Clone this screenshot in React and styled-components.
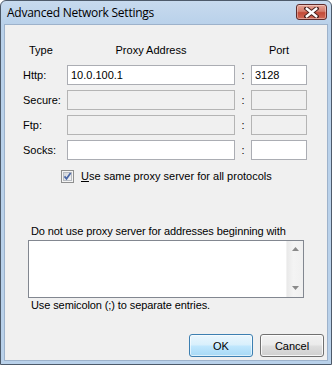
import React from 'react';
import styled, { createGlobalStyle } from 'styled-components';

const GlobalStyle = createGlobalStyle`
  html, body {
    margin: 0;
    padding: 0;
    background: #ffffff;
  }
  * {
    box-sizing: border-box;
  }
`;

const Window = styled.div`
  width: 332px;
  height: 365px;
  display: flex;
  flex-direction: column;
  background: linear-gradient(#c7daee 0px, #b9d1ea 24px, #b9d1ea 100%);
  border: 1px solid #4d5a6a;
  border-radius: 6px 6px 0 0;
  font-family: 'Liberation Sans', Arial, sans-serif;
  font-size: 11px;
  color: #000;
`;

const TitleBar = styled.div`
  height: 23px;
  display: flex;
  align-items: center;
  justify-content: space-between;
  padding: 0 4px 0 6px;
`;

const Title = styled.span`
  font-family: 'Open Sans', 'Liberation Sans', sans-serif;
  font-size: 12px;
  color: #000;
  letter-spacing: -0.25px;
`;

const CloseButton = styled.button`
  width: 31px;
  height: 16px;
  margin-top: -1px;
  padding: 0;
  display: flex;
  align-items: center;
  justify-content: center;
  border: 1px solid #5f2b2b;
  border-radius: 3px;
  background: linear-gradient(#e6a496 0%, #d47c6c 45%, #c24a38 55%, #d06a58 100%);
  box-shadow: inset 0 0 0 1px rgba(255, 255, 255, 0.35);
`;

const Client = styled.div`
  flex: 1;
  margin: 0 3px 3px 3px;
  border: 1px solid #9db2cb;
  background: #f0f0f0;
  display: flex;
  flex-direction: column;
  padding: 18px 3px 3px 18px;
`;

const ProxyGrid = styled.div`
  display: grid;
  grid-template-columns: 44px 168px 16px 56px;
  grid-template-rows: 17px repeat(4, 20px);
  row-gap: 5px;
`;

const HeaderCell = styled.div`
  align-self: start;
  line-height: 14px;
  text-align: ${p => p.$align || 'center'};
  padding-left: ${p => p.$indent || 0}px;
`;

const RowLabel = styled.div`
  align-self: center;
  line-height: 14px;
`;

const Colon = styled.div`
  align-self: center;
  text-align: center;
  line-height: 14px;
`;

const TextField = styled.input`
  width: 100%;
  height: 20px;
  margin: 0;
  padding: 0 3px;
  font-family: 'Liberation Sans', Arial, sans-serif;
  font-size: 11px;
  color: #000;
  border: 1px solid ${p => (p.disabled ? '#b4b4b4' : '#abadb3')};
  background: ${p => (p.disabled ? '#f0f0f0' : '#ffffff')};
  outline: none;
`;

const CheckRow = styled.label`
  display: flex;
  align-items: center;
  gap: 7px;
  margin: 9px 0 0 38px;
  line-height: 14px;
`;

const Underlined = styled.span`
  text-decoration: underline;
`;

const ExcludeBlock = styled.div`
  margin: 42px 0 0 5px;
  width: 276px;
  display: flex;
  flex-direction: column;
`;

const Caption = styled.div`
  line-height: 13px;
  padding-left: 3px;
  letter-spacing: -0.1px;
  margin-bottom: ${p => p.$below || 0}px;
`;

const ListBox = styled.div`
  height: 58px;
  display: flex;
  border: 1px solid #828790;
  background: #ffffff;
  margin-bottom: 1px;
`;

const ListText = styled.textarea`
  flex: 1;
  border: none;
  resize: none;
  outline: none;
  padding: 2px 3px;
  font-family: 'Liberation Sans', Arial, sans-serif;
  font-size: 11px;
  background: transparent;
`;

const ScrollTrack = styled.div`
  width: 17px;
  display: flex;
  flex-direction: column;
  justify-content: space-between;
  align-items: center;
  padding: 6px 0 7px;
  background: linear-gradient(90deg, #e9e9e9, #f4f4f4 40%, #f0f0f0);
  border-left: 1px solid #f2f2f2;
`;

const ButtonBar = styled.div`
  margin-top: auto;
  display: flex;
  justify-content: flex-end;
  gap: 7px;
`;

const DialogButton = styled.button`
  width: 64px;
  height: 23px;
  padding: 0;
  font-family: 'Liberation Sans', Arial, sans-serif;
  font-size: 11px;
  color: #000;
  border-radius: 3px;
  border: 1px solid ${p => (p.$primary ? '#3c7fb1' : '#707070')};
  background: ${p =>
    p.$primary
      ? 'linear-gradient(#eaf6fd 0%, #d9f0fc 45%, #bee6fd 55%, #a7d9f5 100%)'
      : 'linear-gradient(#f2f2f2 0%, #ebebeb 45%, #dddddd 55%, #cfcfcf 100%)'};
  box-shadow: inset 0 0 0 1px ${p => (p.$primary ? 'rgba(255,255,255,0.6)' : 'rgba(255,255,255,0.8)')};
`;

const CloseGlyph = () => (
  <svg width="15" height="11" viewBox="0 0 15 11">
    <path d="M2.5 1.5 L12.5 9.5 M12.5 1.5 L2.5 9.5" stroke="#47201c" strokeWidth="4.4" strokeLinecap="square" />
    <path d="M2.8 1.8 L12.2 9.2 M12.2 1.8 L2.8 9.2" stroke="#ffffff" strokeWidth="2.4" strokeLinecap="square" />
  </svg>
);

const CheckBoxIcon = () => (
  <svg width="13" height="13" viewBox="0 0 13 13">
    <defs>
      <linearGradient id="cbfill" x1="0" y1="0" x2="1" y2="1">
        <stop offset="0" stopColor="#cfd3d9" />
        <stop offset="1" stopColor="#f6f6f6" />
      </linearGradient>
    </defs>
    <rect x="0.5" y="0.5" width="12" height="12" fill="#f4f4f4" stroke="#8e8f8f" />
    <rect x="2.5" y="2.5" width="8" height="8" fill="url(#cbfill)" stroke="#b8bcc2" />
    <path d="M3.5 6.4 L5.5 8.8 L9.6 3" stroke="#4a67a6" strokeWidth="1.7" fill="none" />
  </svg>
);

const Arrow = ({ down }) => (
  <svg width="7" height="4" viewBox="0 0 7 4">
    <path d={down ? 'M0 0 H7 L3.5 4 Z' : 'M0 4 H7 L3.5 0 Z'} fill="#8a8a8a" />
  </svg>
);

const protocols = [
  { name: 'Http:', address: '10.0.100.1', port: '3128', disabled: false },
  { name: 'Secure:', address: '', port: '', disabled: true },
  { name: 'Ftp:', address: '', port: '', disabled: true },
  { name: 'Socks:', address: '', port: '', disabled: false },
];

const App = () => {
  return (
    <>
      <GlobalStyle />
      <Window>
        <TitleBar>
          <Title>Advanced Network Settings</Title>
          <CloseButton aria-label="Close">
            <CloseGlyph />
          </CloseButton>
        </TitleBar>
        <Client>
          <ProxyGrid>
            <HeaderCell $align="left" $indent={6}>Type</HeaderCell>
            <HeaderCell>Proxy Address</HeaderCell>
            <HeaderCell />
            <HeaderCell>Port</HeaderCell>
            {protocols.map(({ name, address, port, disabled }) => (
              <React.Fragment key={name}>
                <RowLabel>{name}</RowLabel>
                <TextField defaultValue={address} disabled={disabled} />
                <Colon>:</Colon>
                <TextField defaultValue={port} disabled={disabled} />
              </React.Fragment>
            ))}
          </ProxyGrid>

          <CheckRow>
            <CheckBoxIcon />
            <span>
              <Underlined>U</Underlined>se same proxy server for all protocols
            </span>
          </CheckRow>

          <ExcludeBlock>
            <Caption $below={2}>Do not use proxy server for addresses beginning with</Caption>
            <ListBox>
              <ListText />
              <ScrollTrack>
                <Arrow />
                <Arrow down />
              </ScrollTrack>
            </ListBox>
            <Caption>Use semicolon (;) to separate entries.</Caption>
          </ExcludeBlock>

          <ButtonBar>
            <DialogButton $primary>OK</DialogButton>
            <DialogButton>Cancel</DialogButton>
          </ButtonBar>
        </Client>
      </Window>
    </>
  );
};

export default App;
